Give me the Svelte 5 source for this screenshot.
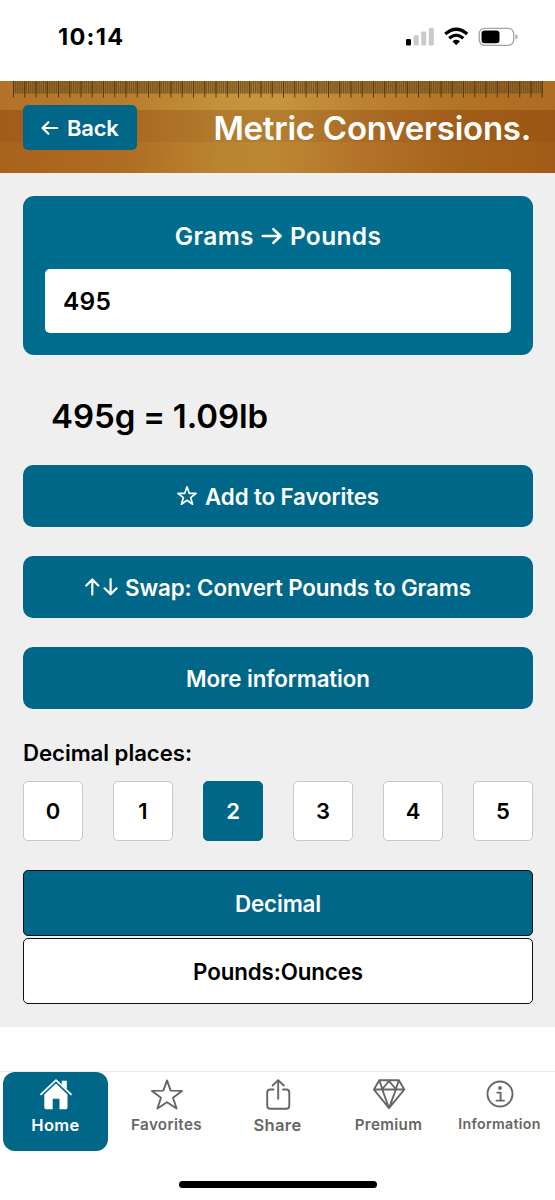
<script>
  const places = [0, 1, 2, 3, 4, 5];
  const selected = 2;
  const ticks = Array.from({ length: 283 }, (_, i) => 13.5 + i * 1.875);
  const majors = Array.from({ length: 48 }, (_, i) => 13.5 + i * 11.25);
</script>

<div class="screen">
  <div class="status">
    <span class="time">10:14</span>
    <svg class="signals" width="114" height="22" viewBox="0 0 114 22">
      <rect x="2" y="12" width="5" height="6.6" rx="1.4" fill="#000" />
      <g fill="#cbcacb">
        <rect x="9.7" y="8.3" width="5" height="10.3" rx="1.3" />
        <rect x="17.2" y="4.6" width="5" height="14" rx="1.3" />
        <rect x="24.8" y="1" width="5" height="17.6" rx="1.3" />
      </g>
      <g fill="none" stroke="#000" stroke-width="3.2">
        <path d="M41.3 7 Q52.2 -2.5 63.2 7" />
        <path d="M45.2 11.2 Q52.2 5.1 59.3 11.2" />
      </g>
      <path d="M48.4 14.3 Q52.2 11.4 56 14.3 L52.2 18.3 Z" fill="#000" />
      <rect x="75.2" y="1.3" width="34.5" height="17" rx="5.4" fill="#fff" stroke="#a3a3a3" stroke-width="1.3" />
      <rect x="77.5" y="3.5" width="18" height="12.7" rx="3.2" fill="#000" />
      <path d="M111.5 7.2 Q113.7 7.8 113.7 9.8 Q113.7 12 111.5 12.6 Z" fill="#a3a3a3" />
    </svg>
  </div>

  <header>
    <svg class="ruler" width="555" height="17" viewBox="0 0 555 17">
      <rect x="13" y="0" width="529.5" height="12.5" fill="#92692a" opacity=".45" />
      {#each ticks as x}<path d="M{x} 0V12.5" stroke="#5b4219" stroke-width=".7" />{/each}
      {#each majors as x}<path d="M{x} 0V16.5" stroke="#51390f" stroke-width="1" />{/each}
    </svg>
    <div class="bar">
      <button class="back">
        <svg width="18" height="16" viewBox="0 0 18 16"><path d="M16.2 8H1.8M7.4 2.2L1.6 8l5.8 5.8" /></svg>
        <span>Back</span>
      </button>
      <h1>Metric Conversions.</h1>
    </div>
  </header>

  <main>
    <section class="card">
      <h2>
        <span>Grams</span>
        <svg width="22" height="18" viewBox="0 0 22 18"><path d="M1.8 9h17.6M12.4 2.2L19.6 9l-7.2 6.8" /></svg>
        <span>Pounds</span>
      </h2>
      <div class="input">495</div>
    </section>

    <p class="result">495g = 1.09lb</p>

    <button class="action">
      <svg class="fav" width="20" height="20" viewBox="0 0 20 20"><path d="M10 .8l2.2 6.5 6.9.1-5.5 4.200 2 6.6-5.6-3.9-5.6 3.9 2-6.6L.9 7.400l6.9-.1z" /></svg>
      <span>Add to Favorites</span>
    </button>
    <button class="action">
      <svg class="swap" width="33" height="18" viewBox="0 0 33 18"><path d="M7.3 16.6V1.8M1.3 7.5l6-6 6 6M25.6 1.2V16M19.6 10.3l6 6 6-6" /></svg>
      <span>Swap: Convert Pounds to Grams</span>
    </button>
    <button class="action"><span>More information</span></button>

    <p class="label">Decimal places:</p>
    <div class="places">
      {#each places as n}<button class:on={n === selected}>{n}</button>{/each}
    </div>

    <div class="formats">
      <button class="on">Decimal</button>
      <button>Pounds:Ounces</button>
    </div>
  </main>

  <nav>
    <a class="home">
      <svg width="34" height="32" viewBox="0 0 34 32"><path d="M2 16.3L17 2.2l15 14.1" fill="none" stroke="#fff" stroke-width="1.8" /><path d="M22.8 2.8h5v8.5l-5-4.7zM17 5.5l11.5 10.9v13.1q0 1.8-1.8 1.8h-6.2v-10.6h-6.8v10.6H7.1Q5.3 31.3 5.3 29.5V16.4z" fill="#fff" stroke="none" /></svg>
      <span>Home</span>
    </a>
    <a class="favorites">
      <svg width="34" height="32" viewBox="0 0 34 32"><path d="M17 2.4L20.7 12.6 32 12.9 23 19.7 26.6 30.5 17 24.2 7.4 30.5 11 19.7 2 12.9 13.3 12.6Z" /></svg>
      <span>Favorites</span>
    </a>
    <a class="share">
      <svg width="34" height="32" viewBox="0 0 34 32"><path d="M12.5 11.5H9.3Q6.2 11.5 6.2 14.6V27.7Q6.2 30.7 9.3 30.7H25.3Q28.3 30.7 28.3 27.7V14.6Q28.3 11.5 25.3 11.5H22M17.2 20.8V2.2M11.6 7.5L17.2 2.1 22.8 7.5" /></svg>
      <span>Share</span>
    </a>
    <a class="premium">
      <svg width="34" height="32" viewBox="0 0 34 32"><path d="M7.3 2.2H26.9L32.3 11.5 17 30.2 1.9 11.5ZM1.9 11.5H32.3M7.3 2.2L10.3 11 17 3 23.8 11 26.9 2.2M10.3 11.5L17 30.2 23.9 11.5" /></svg>
      <span>Premium</span>
    </a>
    <a class="information">
      <svg width="34" height="32" viewBox="0 0 34 32"><circle cx="17" cy="16" r="12.5" /><circle cx="17" cy="10" r="1.9" fill="#666" stroke="none" /><path d="M14.3 14.6H17.6V22.6M13.5 22.6H21" /></svg>
      <span>Information</span>
    </a>
  </nav>
  <div class="indicator"></div>
</div>

<style>
  :global(body) { margin: 0; background: #fff; }
  .screen { width: 555px; height: 1200px; display: flex; flex-direction: column; overflow: hidden; background: #fff; color: #000; font-family: Inter, "Liberation Sans", sans-serif; }
  * { box-sizing: border-box; }
  h1, h2, p { margin: 0; }
  button { font: inherit; border: 0; padding: 0; }
  svg { display: block; flex: none; }
  .status { height: 81px; flex: none; display: flex; justify-content: space-between; padding: 27px 37px 0 58px; }
  .time { font-size: 23.5px; line-height: 20px; font-weight: 700; letter-spacing: 1.3px; }
  header { height: 92px; flex: none;
    background: linear-gradient(180deg, #d8ac4730 0 29px, #7a350030 29px 61px, #9a500022 61px 100%), linear-gradient(92deg, #aa6520 0, #b27127 22%, #bf8c38 40%, #c28f3b 50%, #b77a30 64%, #a9671f 82%, #a35d19 100%); }
  .bar { display: flex; justify-content: space-between; padding: 0 24px 0 23px; margin-top: 7px; height: 45px; }
  .back { width: 114px; display: flex; align-items: center; padding-left: 18px; gap: 8px; border-radius: 5px; background: #006789; color: #fff; font-size: 22px; font-weight: 600; letter-spacing: -.2px; }
  .back svg, h2 svg, .action svg { fill: none; stroke: #fff; stroke-width: 2.2; stroke-linecap: round; stroke-linejoin: round; }
  h1 { color: #fff; font-size: 33px; line-height: 46px; font-weight: 600; letter-spacing: -.25px; white-space: nowrap; }
  main { height: 854px; flex: none; background: #efefef; padding: 23px 22px 0 23px; display: flex; flex-direction: column; }
  .card { height: 159px; flex: none; border-radius: 11px; background: #006d8f; padding: 22px 22px 0; }
  h2 { display: flex; justify-content: center; align-items: center; gap: 7px; height: 35px; color: #fff; font-size: 24.5px; font-weight: 600; letter-spacing: .35px; }
  h2 svg { stroke-width: 2.6; }
  .input { margin-top: 15.5px; height: 64px; border-radius: 5px; background: #fff; padding-left: 18px; font-size: 24.5px; font-weight: 600; line-height: 65px; letter-spacing: .2px; }
  .result { height: 110px; flex: none; padding-left: 28px; font-size: 33px; line-height: 122px; font-weight: 600; letter-spacing: -.05px; word-spacing: -.6px; white-space: nowrap; }
  .action { height: 62px; flex: none; margin-bottom: 29px; border-radius: 10px; background: #006789; color: #fff; display: flex; align-items: center; justify-content: center; gap: 8px; font-size: 22.3px; font-weight: 600; letter-spacing: -.1px; }
  .action .fav { stroke-width: 1.7; }
  .action .swap { margin-right: -1px; }
  .label { height: 43px; flex: none; font-size: 22.2px; font-weight: 600; letter-spacing: -.05px; line-height: 29px; }
  .places { display: flex; justify-content: space-between; }
  .places button { width: 60px; height: 60px; border: 1px solid #c8c8c8; border-radius: 5px; background: #fff; color: #000; font-size: 22px; font-weight: 600; }
  .places .on { background: #006789; border-color: #006789; color: #fff; }
  .formats { margin-top: 29px; display: grid; gap: 2px; }
  .formats button { height: 66px; border: 1.5px solid #111; border-radius: 5px; background: #fff; color: #000; font-size: 22.3px; font-weight: 600; letter-spacing: -.1px; }
  .formats .on { background: #006789; color: #fff; }
  nav { margin-top: 44px; border-top: 1px solid #e9e9e9; height: 80px; flex: none; display: grid; grid-template-columns: repeat(5, 111px); }
  nav a { display: flex; flex-direction: column; align-items: center; padding-top: 6px; color: #666; font-weight: 600; white-space: nowrap; }
  nav svg { fill: none; stroke: #666; stroke-width: 1.9; stroke-linejoin: round; stroke-linecap: round; }
  nav span { line-height: 20px; margin-top: 5px; }
  .home { margin: 0 3px; border-radius: 12px; background: #006789; color: #fff; font-size: 16.5px; letter-spacing: .4px; }
  .favorites, .premium { font-size: 15.2px; letter-spacing: .35px; }
  .share { font-size: 16.5px; letter-spacing: .35px; }
  .information { font-size: 14.2px; letter-spacing: .3px; }
  .information span { margin-top: 4px; }
  .indicator { width: 198px; height: 7px; border-radius: 4px; background: #000; margin: 30px auto 0; flex: none; }
</style>
